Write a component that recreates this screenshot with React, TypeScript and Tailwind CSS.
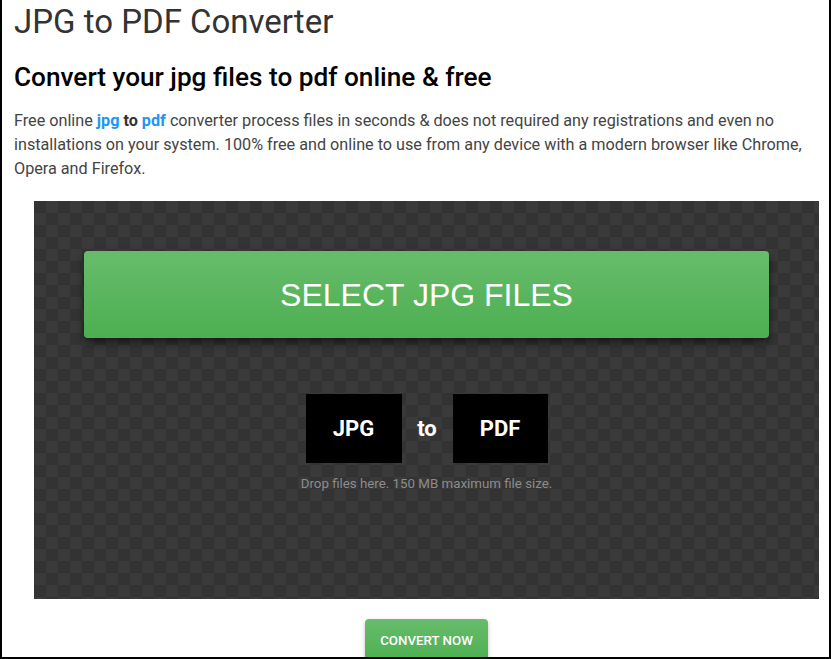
import React from 'react';

const App: React.FC = () => {
  return (
    <div className="h-[659px] overflow-hidden border-x-2 border-b-2 border-black bg-white font-['Roboto',sans-serif]">
      <div className="px-3">
        <h1 className="pt-[3px] text-[33px] leading-[38px] text-[#333] font-normal">JPG to PDF Converter</h1>
        <h2 className="mt-[21px] text-[26.2px] leading-[31px] text-black font-medium">
          Convert your jpg files to pdf online &amp; free
        </h2>
        <p className="mt-[16px] text-[16.2px] leading-[24px] text-[#444]">
          Free online <a className="font-bold text-[#2196f3]">jpg</a> <b className="text-[#333]">to</b>{' '}
          <a className="font-bold text-[#2196f3]">pdf</a> converter process files in seconds &amp; does not required
          any registrations and even no installations on your system. 100% free and online to use from any device
          with a modern browser like Chrome, Opera and Firefox.
        </p>

        <div className="ml-[20px] mt-[20px] w-[785px] h-[398px] pt-[50px] px-[50px] bg-[#333] bg-[repeating-conic-gradient(#3a3a3a_0_25%,#333333_0_50%)] bg-[length:24px_24px]">
          <button className="w-full h-[87px] rounded-[4px] bg-gradient-to-b from-[#67bc6b] to-[#4caf50] shadow-[0_5px_9px_rgba(0,0,0,0.55)] text-white text-[32px] font-['Liberation_Sans',Arial,sans-serif]">
            SELECT JPG FILES
          </button>

          <div className="mt-[56px] flex items-center justify-center">
            <div className="w-[96px] h-[69px] bg-black flex items-center justify-center text-white text-[22px] font-bold">
              JPG
            </div>
            <div className="w-[51px] text-center text-white text-[22px] font-bold">to</div>
            <div className="w-[95px] h-[69px] bg-black flex items-center justify-center text-white text-[22px] font-bold">
              PDF
            </div>
          </div>
          <p className="mt-[11px] text-center text-[13.3px] text-[#8c8c8c]">Drop files here. 150 MB maximum file size.</p>
        </div>

        <div className="ml-[20px] w-[785px] mt-[20px] flex justify-center">
          <button className="w-[123px] h-[44px] rounded-[4px] bg-gradient-to-b from-[#67bc6b] to-[#4caf50] shadow-[0_2px_4px_rgba(0,0,0,0.25)] text-white text-[13.3px] font-medium uppercase">
            Convert now
          </button>
        </div>
      </div>
    </div>
  );
};

export default App;
